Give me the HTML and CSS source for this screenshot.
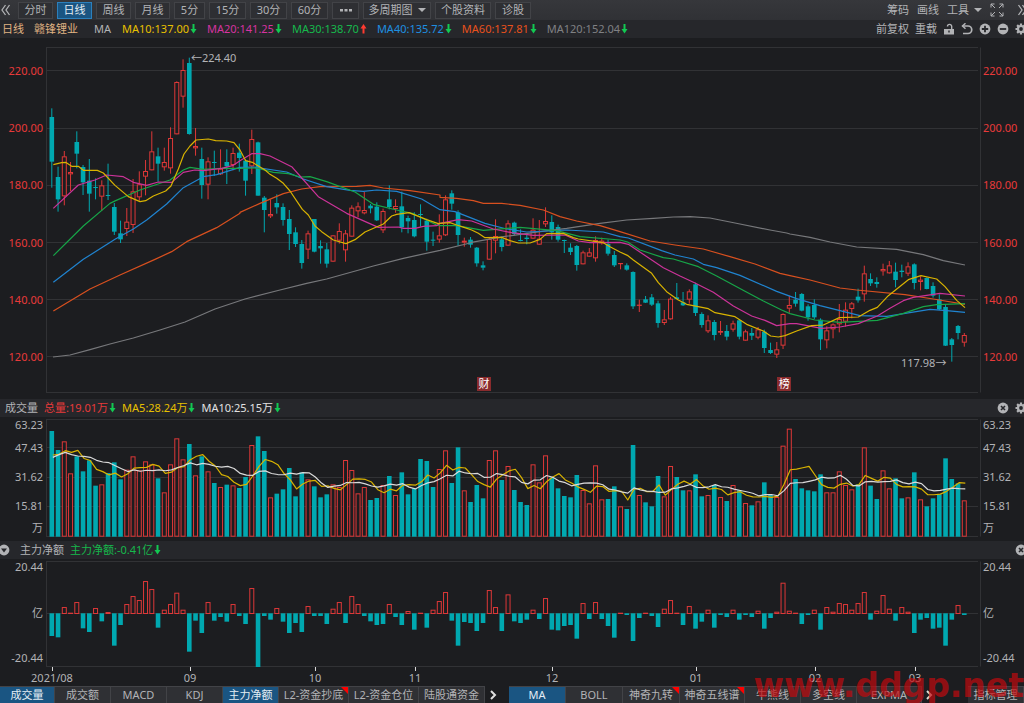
FILE: index.html
```html
<!DOCTYPE html>
<html lang="zh-CN">
<head>
<meta charset="utf-8">
<title>赣锋锂业 日线</title>
<link rel="stylesheet" href="styles.css">
</head>
<body>
<svg class="defs" aria-hidden="true">
  <symbol id="down" viewBox="0 0 7 10"><path d="M3.5 0v6" stroke="currentColor" stroke-width="2"/><path d="M.5 5h6L3.5 9.5z" fill="currentColor"/></symbol>
  <symbol id="up" viewBox="0 0 7 10"><path d="M3.5 9.500v-6" stroke="currentColor" stroke-width="2"/><path d="M.5 4.500h6L3.5 0z" fill="currentColor"/></symbol>
  <symbol id="gear" viewBox="0 0 12 12"><path d="M6 .5v11M.5 6h11M2.100 2.100l7.800 7.800M9.900 2.100L2.100 9.900" stroke="currentColor" stroke-width="2.200"/><circle cx="6" cy="6" r="3" fill="none" stroke="currentColor" stroke-width="2.200"/><circle cx="6" cy="6" r="1.900" fill="#26272b"/></symbol>
  <symbol id="close" viewBox="0 0 12 12"><circle cx="6" cy="6" r="5.400" fill="currentColor"/><path d="M4 4l4 4M8 4L4 8" stroke="#26272b" stroke-width="1.600"/></symbol>
</svg>
<main class="terminal">
  <nav class="toolbar" aria-label="周期">
    <button class="plain" aria-label="收起"><svg class="icon" viewBox="0 0 12 12"><path d="M5.500 1L2 6l3.500 5M9.500 1L6 6l3.500 5" fill="none" stroke="currentColor" stroke-width="1.300"/></svg></button>
    <div class="periods">
      <button class="w35">分时</button><button class="w35 on">日线</button><button class="w35">周线</button><button class="w35">月线</button>
      <button class="w31">5分</button><button class="w37">15分</button><button class="w37">30分</button><button class="w37">60分</button>
      <button class="w27" aria-label="更多"><svg class="icon" viewBox="0 0 12 12"><path d="M0 5h3v2.500H0zM4.500 5h3v2.500h-3zM9 5h3v2.500H9z" fill="currentColor"/></svg></button>
      <button class="w68">多周期图<i class="caret"></i></button><button class="w56">个股资料</button><button class="w36">诊股</button>
    </div>
    <div class="tools">
      <button class="plain">筹码</button><button class="plain">画线</button><button class="plain">工具<i class="caret"></i></button>
      <button class="plain expand" aria-label="全屏"><svg class="icon14" viewBox="0 0 14 14"><path d="M1 4.500V1h3.500M1 1l4 4M9.500 1H13v3.500M13 1L9 5M1 9.500V13h3.500M1 13l4-4M9.500 13H13V9.500M13 13L9 9" fill="none" stroke="currentColor"/></svg></button>
      <button class="plain" aria-label="展开"><svg class="icon" viewBox="0 0 12 12"><path d="M2.500 1L6 6l-3.500 5M6.500 1L10 6l-3.500 5" fill="none" stroke="currentColor" stroke-width="1.300"/></svg></button>
    </div>
  </nav>

  <header class="strip info">
    <span class="tan">日线</span><span class="tan name">赣锋锂业</span><span class="ma">MA</span>
    <div class="averages">
      <span class="yellow">MA10:137.00<svg class="arrow g"><use href="#down"/></svg></span>
      <span class="pink">MA20:141.25<svg class="arrow g"><use href="#down"/></svg></span>
      <span class="green">MA30:138.70<svg class="arrow r"><use href="#up"/></svg></span>
      <span class="blue">MA40:135.72<svg class="arrow g"><use href="#down"/></svg></span>
      <span class="orange">MA60:137.81<svg class="arrow g"><use href="#down"/></svg></span>
      <span class="gray">MA120:152.04<svg class="arrow g"><use href="#down"/></svg></span>
    </div>
    <div class="actions">
      <button class="plain">前复权</button><button class="plain">重载</button>
      <button class="plain" aria-label="锁定"><svg class="icon" viewBox="0 0 12 12"><path d="M1 6h10v5.500H1z" fill="currentColor"/><path d="M4.500 3.500a2.100 2.100 0 0 1 4.200 0V6" fill="none" stroke="currentColor" stroke-width="1.400"/><path d="M5.300 7.500h1.400v2H5.300z" fill="#26272b"/></svg></button>
      <button class="plain" aria-label="撤销"><svg class="icon" viewBox="0 0 12 12"><path d="M1.500 3h5.500a3.600 3.600 0 0 1 0 7.500H2" fill="none" stroke="currentColor" stroke-width="1.700"/><path d="M4.500 .3L1.500 3l3 2.700" fill="none" stroke="currentColor" stroke-width="1.500"/></svg></button>
      <button class="plain" aria-label="放大"><svg class="icon" viewBox="0 0 12 12"><circle cx="6" cy="6" r="5.400" fill="currentColor"/><path d="M6 2.800v6.400M2.800 6h6.400" stroke="#26272b" stroke-width="1.800"/></svg></button>
      <button class="plain" aria-label="缩小"><svg class="icon" viewBox="0 0 12 12"><circle cx="6" cy="6" r="5.400" fill="currentColor"/><path d="M2.800 6h6.400" stroke="#26272b" stroke-width="1.800"/></svg></button>
      <button class="plain" aria-label="设置"><svg class="icon"><use href="#gear"/></svg></button>
    </div>
  </header>

  <section class="panel">
    <div class="axis left price"><span>220.00</span><span>200.00</span><span>180.00</span><span>160.00</span><span>140.00</span><span>120.00</span></div>
    <div class="plot">
      <svg id="price" viewBox="46 38 935 361" preserveAspectRatio="none" role="img" aria-label="日线K线图"></svg>
      <span class="note high">←224.40</span><span class="note low">117.98→</span>
      <span class="mark report">财</span><span class="mark rank">榜</span>
    </div>
    <div class="axis right price"><span>220.00</span><span>200.00</span><span>180.00</span><span>160.00</span><span>140.00</span><span>120.00</span></div>
  </section>

  <header class="strip volume-head">
    <span>成交量</span>
    <span class="red">总量:19.01万<svg class="arrow g"><use href="#down"/></svg></span>
    <span class="yellow">MA5:28.24万<svg class="arrow g"><use href="#down"/></svg></span>
    <span class="white">MA10:25.15万<svg class="arrow g"><use href="#down"/></svg></span>
    <div class="actions"><button class="plain" aria-label="关闭成交量"><svg class="icon"><use href="#close"/></svg></button><button class="plain" aria-label="成交量设置"><svg class="icon"><use href="#gear"/></svg></button></div>
  </header>

  <section class="panel">
    <div class="axis left volume"><span>63.23</span><span>47.43</span><span>31.62</span><span>15.81</span><span>万</span></div>
    <div class="plot"><svg id="volume" viewBox="46 417 935 124" preserveAspectRatio="none" role="img" aria-label="成交量"></svg></div>
    <div class="axis right volume"><span>63.23</span><span>47.43</span><span>31.62</span><span>15.81</span><span>万</span></div>
  </section>

  <header class="strip flow-head">
    <button class="plain fold" aria-label="折叠"><svg class="icon" viewBox="0 0 12 12"><circle cx="6" cy="6" r="5.400" fill="currentColor"/><path d="M3 4.500h6L6 8.500z" fill="#26272b"/></svg></button>
    <span>主力净额</span>
    <span class="green">主力净额:-0.41亿<svg class="arrow g"><use href="#down"/></svg></span>
    <div class="actions"><button class="plain" aria-label="关闭主力净额"><svg class="icon"><use href="#close"/></svg></button></div>
  </header>

  <section class="panel">
    <div class="axis left flow"><span>20.44</span><span>亿</span><span>-20.44</span></div>
    <div class="plot"><svg id="flow" viewBox="46 559 935 108" preserveAspectRatio="none" role="img" aria-label="主力净额"></svg></div>
    <div class="axis right flow"><span>20.44</span><span>亿</span><span>-20.44</span></div>
  </section>

  <div class="months" id="months"></div>

  <footer class="tabs">
    <div class="group lower">
      <button class="t55 on">成交量</button><button class="t56">成交额</button><button class="t56">MACD</button><button class="t56">KDJ</button><button class="t56 on">主力净额</button><button class="t70 hot">L2-资金抄底</button><button class="t70">L2-资金仓位</button><button class="t66">陆股通资金</button>
      <button class="plain more" aria-label="更多副图"><svg class="icon" viewBox="0 0 12 12"><path d="M4 2l4 4-4 4" fill="none" stroke="currentColor" stroke-width="2"/></svg></button>
    </div>
    <div class="group upper">
      <button class="t57 on">MA</button><button class="t57">BOLL</button><button class="t57 hot">神奇九转</button><button class="t65 hot">神奇五线谱</button><button class="t56">牛熊线</button><button class="t56">多空线</button><button class="t65">EXPMA</button>
      <button class="plain next" aria-label="更多主图"><svg class="icon" viewBox="0 0 12 12"><path d="M4 2l4 4-4 4" fill="none" stroke="currentColor" stroke-width="2"/></svg></button>
    </div>
    <button class="t56 manage">指标管理</button>
  </footer>
  <div class="watermark">www.ddgp.net</div>
</main>
<script src="chart.js"></script>
</body>
</html>
```

FILE: styles.css
```css
* { box-sizing: border-box; }
body {
  margin: 0;
  background: #1c1d20;
  color: #b2b3b6;
  font: 11px/16px "Noto Sans", "Noto Sans CJK SC", sans-serif;
}
button { font: inherit; color: inherit; padding: 0; border: 0; background: none; white-space: nowrap; }
.defs { display: none; }
.terminal {
  position: relative;
  display: grid;
  grid-template-columns: minmax(0, 1fr);
  grid-template-rows: 20px 18px minmax(0, 361fr) 18px minmax(0, 124fr) 18px minmax(0, 108fr) 19px 17px;
  height: 100vh;
  min-height: 480px;
  overflow: hidden;
}
.icon { display: block; width: 12px; height: 12px; }
.icon14 { display: block; width: 14px; height: 14px; }
.plain { display: flex; align-items: center; flex: none; }

.toolbar { display: flex; align-items: center; background: linear-gradient(#36373b, #303135); overflow: hidden; }
.periods { display: flex; gap: 4px; padding-left: 6px; }
.periods button {
  display: flex; align-items: center; justify-content: center;
  height: 17px; flex: none;
  border: 1px solid #424347; background: #2e2f33;
}
.periods .on { background: #1a5582; border-color: #2b80bd; color: #e4edf4; }
.w27 { width: 27px; } .w31 { width: 31px; } .w35 { width: 35px; } .w36 { width: 36px; }
.w37 { width: 37px; } .w56 { width: 56px; } .w68 { width: 68px; }
.caret { margin-left: 5px; border: 4px solid transparent; border-top-color: currentColor; border-bottom: 0; }
.tools { display: flex; align-items: center; gap: 8px; margin: 0 -4px 0 auto; }
.tools .expand { margin-right: 4px; }

.strip { display: flex; align-items: center; background: #26272b; overflow: hidden; white-space: nowrap; }
.strip span { display: flex; align-items: center; flex: none; }
.arrow { width: 7px; height: 10px; flex: none; margin-left: 1px; }
.g { color: #12c952; } .r { color: #ff3b30; }
.info { padding-left: 2px; }
.name { margin-left: 10px; }
.ma { margin: 0 11px 0 16px; }
.averages { display: flex; gap: 10px; }
.tan { color: #e0b483; } .yellow { color: #e8c000; } .pink { color: #d633a0; } .green { color: #16b84c; }
.blue { color: #1e8fe0; } .orange { color: #e8511c; } .gray { color: #808184; } .red { color: #e83a3a; } .white { color: #e2e2e2; }
.actions { display: flex; gap: 6px; margin: 0 -3px 0 auto; }
.volume-head { padding-left: 5px; gap: 6px; }
.flow-head { gap: 6px; }
.fold { margin: 0 4px 0 -2px; }

.panel { display: grid; grid-template-columns: 46px minmax(0, 1fr) 43px; grid-template-rows: minmax(0, 1fr); }
.plot { position: relative; }
.plot svg { display: block; width: 100%; height: 100%; }
.axis { display: flex; flex-direction: column; justify-content: space-between; }
.left { text-align: right; padding-right: 3px; }
.right { padding-left: 2px; }
.price { color: #e83a3a; padding-top: 25px; padding-bottom: 34px; }
.volume { display: grid; grid-template-columns: 1fr; grid-template-rows: 23fr 29fr 29fr 22fr 21fr; }
.flow { padding-bottom: 1px; }

.grid { fill: none; stroke: #313235; }
.up { fill: #1c1d20; stroke: #de3838; }
.down { fill: #00a8b0; stroke: none; }
.wick-up { stroke: #de3838; }
.wick-down { stroke: #00a8b0; }
.line { fill: none; stroke-width: 1.200; stroke-linejoin: round; }
.l10, .v5 { stroke: #d9b300; } .l20 { stroke: #cc3399; } .l30 { stroke: #17a548; }
.l40 { stroke: #2084d0; } .l60 { stroke: #d8501f; } .l120 { stroke: #77787b; } .v10 { stroke: #dadada; }

.note { position: absolute; }
.high { left: 15.500%; top: 3.300%; }
.low { right: 3.700%; top: 87.800%; }
.mark {
  position: absolute; top: 93.800%;
  width: 14px; height: 14px;
  background: #8a2b2d; color: #fff; line-height: 14px; text-align: center;
}
.report { left: 46.100%; }
.rank { left: 78.200%; }

.months { position: relative; margin: 0 43px 0 46px; }
.months span { position: absolute; top: 3px; transform: translateX(-50%); }
.months i { position: absolute; top: 0; width: 1px; height: 4px; background: #d8d8d8; }

.tabs { display: flex; background: #1c1d20; overflow: hidden; }
.group { display: flex; flex: none; }
.lower { margin-right: 10px; }
.tabs button:not(.plain) {
  position: relative; flex: none; height: 17px;
  border-top: 1px solid #424347; border-right: 1px solid #424347;
  background: #2f3034;
}
.tabs .on:not(.plain) { background: #1a5582; color: #e4edf4; }
.t55 { width: 55px; } .t56 { width: 56px; } .t57 { width: 57px; } .t65 { width: 65px; } .t66 { width: 66px; } .t70 { width: 70px; }
.hot::after {
  content: ""; position: absolute; right: 0; top: 0;
  border-top: 7px solid #f00; border-left: 7px solid transparent;
}
.more { margin-left: 2px; color: #e0e0e0; }
.next { margin-left: 1px; color: #e0e0e0; }
.manage { margin-left: auto; }
.watermark {
  position: absolute; right: 0; bottom: -2px;
  font: bold 33px/38px "DejaVu Sans", sans-serif;
  color: rgba(196, 10, 14, 0.7);
  pointer-events: none;
}
```

FILE: chart.js
```js
// Vertical values are stored in thirds of a drawing unit, relative to each block's base.
const candles = [];
function block(base, rows) {
  rows.trim().split(/\s+/).forEach(function (row) {
    const v = row.slice(1).split(',').map(function (n) { return base + n / 3; });
    candles.push({ up: row[0] === 'r', high: v[0], top: v[1], bottom: v[2], low: v[3] });
  });
}
block(40, `t205,231,365,443 t380,411,478,515 r333,349,469,496 r366,396,403,453 t274,306,341,385 t375,381,427,465
t357,422,461,515 t415,441,443,478 r421,436,470,512 t371,465,467,480 t489,501,575,585 t542,580,598,609
r504,545,567,588 r417,454,555,579 r394,433,472,482 r360,393,410,466 r274,334,391,391 t323,349,371,425
r323,366,382,392 r262,294,385,401 r124,126,283,283 r58,90,170,203 t53,69,282,284 r264,318,325,347
t323,357,435,476 r352,364,434,478 t332,366,368,408 r328,386,403,405 t328,366,379,432 r323,339,375,391
t311,338,354,395 t358,362,422,467 r269,297,379,402 t305,307,467,467`);
block(140, `t168,173,210,277 r178,222,229,234 t163,189,202,221 t190,201,240,257 t210,237,282,330 t262,277,312,321
t300,312,369,386 r272,280,329,357 t237,237,335,337 t301,318,325,371 t309,328,371,383 r286,286,365,365
r250,273,302,311 r270,280,331,365 r196,203,290,290 r187,199,214,232 r156,210,220,223 t192,197,205,220
t187,200,241,243 r206,213,271,279 t136,178,201,208 r178,198,207,218 t155,199,262,277 t227,234,244,280
t217,240,289,292 t193,222,225,260 t236,242,305,332 t275,299,302,318 r223,286,299,308 r166,178,286,288
t151,160,191,209 t211,217,285,317 r293,302,308,320 t291,299,314,323 t321,323,370,380 t364,376,383,391`);
block(170, `r203,207,269,269 r148,198,212,250 t201,208,231,244 r151,160,227,227 t155,158,192,196 t178,210,213,214
t190,203,207,223 r145,179,206,206 r150,206,224,224 r112,153,163,171 t136,156,187,209 t164,171,209,215
t209,210,213,249 t220,233,246,255 t225,228,285,302 r242,247,283,283 r234,247,260,260 r199,210,265,275
r203,212,220,224 t209,222,251,257 t243,255,286,291 r279,279,282,298 t280,286,299,302 t304,306,409,417
r389,404,407,426 t378,388,398,399 t372,382,404,408 t392,400,459,473 r420,448,459,465 r381,386,448,449
t339,382,387,387 t366,397,406,408`);
block(230, `r178,184,209,221 t158,163,249,258 t247,252,285,293 r256,271,304,309 t270,276,315,331 r273,303,308,315
t285,303,320,331 r272,280,299,305 t268,271,320,328 r299,304,332,332 t294,309,317,330 r291,298,323,328
t299,305,354,369 t338,360,369,372 r336,358,374,384 r250,252,347,357 r197,225,236,248 t186,209,221,230
t189,192,242,244 t223,229,262,272 t208,225,262,267 t265,269,328,360 r289,301,331,355 r280,283,298,325
r222,267,283,307 r217,239,275,290 r216,220,237,265 t176,200,211,218 r107,130,193,215 t130,147,160,168
t142,156,162,173 r101,117,124,137 r93,106,130,131 t98,125,150,172 t104,122,126,142 r97,109,131,138
t100,103,159,178 r139,149,156,181 t142,144,177,178 t157,168,197,203 t193,208,238,240 t222,231,347,348
t324,328,345,395 t285,288,309,328 r309,315,338,350`);

const volumes = [108,165,139,235,184,229,196,272,268,234,202,253,224,184,226,199,208,250,292,208,130,193,147,241,184,229,264,276,269,271,
279,246,150,124,168,307,296,283,219,304,232,253,274,307,298,268,276,195,225,295,276,315,309,270,243,300,232,298,280,192,
198,276,222,166,264,157,286,321,270,310,195,166,255,213,285,321,330,208,262,181,248,280,303,307,240,285,325,211,313,312,
274,334,342,150,300,322,334,243,304,213,246,286,286,238,304,300,270,306,318,270,286,324,331,319,262,300,306,152,101,252,
280,286,289,238,292,292,229,270,283,268,157,272,312,226,280,250,310,307,232,313,334,310,298,190,252,265,316];

const flows = [288,292,202,219,187,265,276,205,244,217,317,255,193,169,181,124,148,263,210,193,159,210,335,242,279,187,242,231,245,193,
228,252,145,381,228,239,205,245,279,249,276,199,228,228,252,207,187,249,169,193,228,244,255,252,193,231,255,214,269,219,
263,210,184,157,242,317,246,249,273,249,151,202,273,164,244,249,239,210,237,175,269,271,258,255,296,190,237,187,237,258,
293,219,225,303,234,219,228,261,207,181,219,255,199,266,245,210,263,225,231,210,239,225,231,213,266,234,216,129,213,219,
252,225,210,269,202,216,190,193,210,190,157,239,213,166,207,242,202,216,279,239,234,266,263,317,239,196,225];

// Moving averages: [base x, base y, x, y, x, y, ...] for each stretch of the line.
const averages = {
  l120: [[0,0,159,1071,210,1065,270,1049,330,1032,400,1014,480,990,555,966,645,927,735,897],
    [240,140,120,450,200,430,260,417,400,378,490,355,600,331,690,309],
    [440,170,90,218,190,200,300,185,380,175,480,160,560,150,640,145,700,141,750,140],
    [620,230,270,-36,345,-21,450,0,500,9],[790,230,0,12,60,22,120,36,200,51,320,58,400,74,460,92,525,105]],
  l60: [[0,40,160,813,270,747,360,705,465,658,515,635,560,605,650,563,720,520],
    [240,140,0,217,60,190,130,161,185,147,240,140,350,139,390,136,430,144,510,152,600,165],
    [440,170,0,82,50,85,100,92,130,100,185,100,240,106,310,120,360,140,410,153,480,167],
    [620,230,0,5,90,33,165,45,250,57,330,80,405,102,480,130],
    [790,230,0,137,60,150,150,174,200,180,345,194,430,207,525,223]],
  l40: [[0,40,160,727,250,658,345,598,400,567,440,540,500,492,550,443,610,410,650,404,720,382],
    [240,140,40,81,140,96,190,117,260,140,330,151,370,154,410,150,470,154,545,177,600,209],
    [440,170,45,125,135,160,200,177,260,186,380,180,490,186],
    [620,230,0,20,25,24,125,62,165,75,220,87,250,103,290,113,360,136,470,184],
    [790,230,20,206,90,227,150,242,210,257,290,259,420,238,470,242,525,247]],
  l30: [[0,40,160,647,250,558,330,490,347,482,420,450,510,420,550,390,570,382,610,388,665,385],
    [240,140,0,85,50,84,100,97,145,101,180,111,210,110,260,125,345,156,400,193,470,210,520,221,590,255],
    [440,170,0,167,50,167,130,181,240,172,350,182,420,200],
    [620,230,0,30,23,36,60,60,130,83,160,87,235,110,290,138,375,184,430,213,485,240],
    [790,230,0,251,75,270,150,277,262,271,340,250,400,230,440,224,525,221]],
  l20: [[0,40,160,505,235,435,285,420,320,405,370,410,400,427,440,436,475,426,515,427,550,397,585,390,610,392,665,385,700,376],
    [240,140,0,62,35,41,60,41,90,48,155,80,180,108,235,170,320,220,415,262,475,261,490,265,525,265,550,259,590,257],
    [440,170,0,160,55,149,95,153,160,177,215,188,280,196,375,195,415,213,450,218],
    [620,230,0,37,25,43,130,113,180,138,225,159,280,187,340,228,395,258,435,271,470,287],
    [790,230,0,281,20,281,95,295,150,291,205,281,262,258,300,235,340,212,370,202,450,190,525,198]],
  l10: [[0,40,160,374,185,368,197,367,215,379,235,379,250,391,292,391,310,399,345,436,385,470,420,485,437,482,460,468,497,453,513,438,535,387,552,342,570,318,588,300,625,297,647,302,680,303,702,308],
    [240,140,0,30,17,62,37,67,55,78,75,90,90,103,110,115,130,130,150,153,187,208,205,225,225,258,245,275,280,300,318,311,345,299,375,276,430,252,455,228,470,223,507,218,560,239,595,251],
    [440,170,0,160,30,158,50,165,72,172,95,180,115,190,135,203,185,202,210,212,235,219,270,219,300,208,320,191,370,190,400,203,415,207,490,218,510,230],
    [620,230,0,66,22,76,40,90,95,130,115,158,140,185,175,210,200,223,265,236,285,248,345,260,380,283,430,303,452,318,475,321,495,317],
    [790,230,20,303,65,287,100,285,148,263,205,261,240,241,262,232,295,197,355,149,393,137,440,147,465,170,500,211,525,233]]
};

const NS = 'http://www.w3.org/2000/svg';
function draw(svg, tag, attrs) {
  const el = document.createElementNS(NS, tag);
  Object.keys(attrs).forEach(function (k) { el.setAttribute(k, attrs[k]); });
  svg.appendChild(el);
}
function xAt(i) { return 51.8 + 6.25 * i; }
function grid(svg, top, bottom, lines) {
  let d = 'M46.5 ' + top + 'V' + bottom + 'M980.5 ' + top + 'V' + bottom;
  lines.concat([top, bottom]).forEach(function (y) { d += 'M46 ' + y + 'H978'; });
  draw(svg, 'path', { 'class': 'grid', d: d });
}
function bar(svg, i, up, top, bottom) {
  const h = bottom - top;
  if (up) draw(svg, 'rect', { 'class': 'up', x: xAt(i) - 2, y: top + .5, width: 4, height: Math.max(h - 1, .2) });
  else draw(svg, 'rect', { 'class': 'down', x: xAt(i) - 2.3, y: top, width: 4.6, height: Math.max(h, 1) });
}
function line(svg, name, points) {
  draw(svg, 'polyline', { 'class': 'line ' + name, points: points.join(' ') });
}

const price = document.getElementById('price');
grid(price, 47.5, 392.5, [70.5, 128.5, 185.5, 242.5, 299.5, 356.5]);
candles.forEach(function (c, i) {
  draw(price, 'path', { 'class': c.up ? 'wick-up' : 'wick-down', d: 'M' + xAt(i) + ' ' + c.high + 'V' + c.low });
  bar(price, i, c.up, c.top, c.bottom);
});
Object.keys(averages).forEach(function (name) {
  const points = [];
  averages[name].forEach(function (s) {
    for (let k = 2; k < s.length; k += 2) points.push((s[0] + s[k] / 3) + ',' + (s[1] + s[k + 1] / 3));
  });
  line(price, name, points);
});

const volume = document.getElementById('volume');
grid(volume, 419.5, 536.5, [447.5, 477.5, 506.5]);
volumes.forEach(function (v, i) { bar(volume, i, candles[i].up, 395 + v / 3, 536.7); });
function volumeAverage(name, span, opening) {
  line(volume, name, volumes.map(function (_, i) {
    const part = volumes.slice(Math.max(0, i - span + 1), i + 1);
    const mean = i < opening.length ? opening[i] : part.reduce(function (a, b) { return a + b; }) / part.length;
    return (xAt(i) + 1) + ',' + (395 + mean / 3);
  }));
}
volumeAverage('v5', 5, [180, 178, 167, 172]);
volumeAverage('v10', 10, [187, 179, 172, 179, 183, 184, 187, 196, 201]);

const flow = document.getElementById('flow');
grid(flow, 561.5, 666.5, [613.5]);
flows.forEach(function (v, i) {
  const y = 540 + v / 3;
  if (v < 220) bar(flow, i, true, y - .3, 614);
  else bar(flow, i, false, 613.3, y);
});

const months = document.getElementById('months');
[['2021/08', 52], ['09', 190], ['10', 315], ['11', 415], ['12', 552], ['01', 696], ['02', 815], ['03', 915]].forEach(function (m) {
  const at = (m[1] - 46) / 935 * 100 + '%';
  const tick = document.createElement('i');
  const label = document.createElement('span');
  tick.style.left = at;
  label.style.left = at;
  label.textContent = m[0];
  months.append(tick, label);
});
```
